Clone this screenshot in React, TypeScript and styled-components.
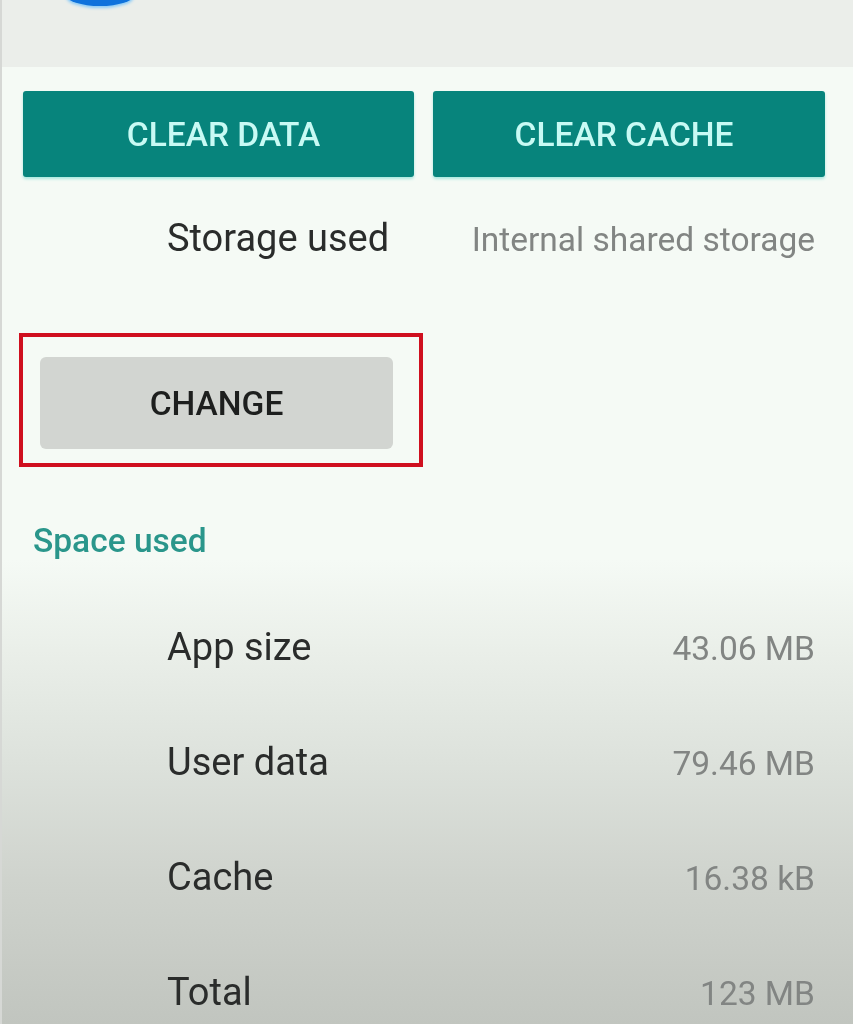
import React from "react";
import styled, { createGlobalStyle } from "styled-components";

const GlobalStyle = createGlobalStyle`
  html, body {
    margin: 0;
    padding: 0;
    background: #f5f9f5;
  }
`;

const Screen = styled.div`
  width: 853px;
  height: 1024px;
  overflow: hidden;
  position: relative;
  font-family: Roboto, "Liberation Sans", sans-serif;
  border-left: 2px solid #d6d8d5;
  box-sizing: border-box;
  background: linear-gradient(
    to bottom,
    #f5faf5 0,
    #f5faf5 560px,
    #eaefe9 650px,
    #dde2dc 760px,
    #cfd3cd 880px,
    #c1c5bf 1024px
  );
`;

const Header = styled.div`
  height: 67px;
  background: #ebeeea;
  position: relative;
`;

const AppIcon = styled.div`
  position: absolute;
  left: 64px;
  top: -16px;
  width: 68px;
  height: 22px;
  border-radius: 50%;
  background: #0f72dc;
  box-shadow: 0 2px 3px #8ccbf7;
`;

const ActionRow = styled.div`
  display: grid;
  grid-template-columns: 391px 392px;
  column-gap: 19px;
  padding: 24px 0 0 21px;
`;

const ActionButton = styled.div<{ $shift: number }>`
  height: 86px;
  display: flex;
  align-items: center;
  justify-content: center;
  padding-left: ${(p) => (p.$shift > 0 ? p.$shift : 0)}px;
  padding-right: ${(p) => (p.$shift < 0 ? -p.$shift : 0)}px;
  background: #07847c;
  border-radius: 3px;
  box-shadow: 0 2px 3px #a9e8df;
  color: #c8faf4;
  font-size: 33.5px;
  font-weight: 500;
`;

const ButtonText = styled.span`
  filter: blur(0.4px);
`;

const Row = styled.div<{ $top: number }>`
  display: flex;
  justify-content: space-between;
  align-items: baseline;
  height: 44px;
  line-height: 44px;
  margin-top: ${(p) => p.$top}px;
  padding: 0 38px 0 165px;
`;

const Label = styled.span`
  font-size: 38px;
  color: #2a2c2b;
  filter: blur(0.4px);
`;

const Value = styled.span`
  font-size: 33.5px;
  color: #828583;
  filter: blur(0.4px);
`;

const Highlight = styled.div`
  width: 404px;
  height: 134px;
  margin: 73px 0 0 17px;
  box-sizing: border-box;
  border: 4px solid #cf0f1e;
  padding: 20px 26px 14px 17px;
`;

const ChangeButton = styled.div`
  height: 92px;
  display: flex;
  align-items: center;
  justify-content: center;
  background: #d2d5d1;
  border-radius: 6px;
  color: #1d1f1e;
  font-size: 33.5px;
  font-weight: 500;
`;

const SectionTitle = styled.div`
  height: 40px;
  line-height: 40px;
  margin: 54px 0 0 31px;
  font-size: 33.5px;
  font-weight: 500;
  color: #2a968b;
  filter: blur(0.4px);
`;

const rows = [
  { label: "App size", value: "43.06 MB", top: 64 },
  { label: "User data", value: "79.46 MB", top: 71 },
  { label: "Cache", value: "16.38 kB", top: 71 },
  { label: "Total", value: "123 MB", top: 71 },
];

const App = () => {
  return (
    <Screen>
      <GlobalStyle />
      <Header>
        <AppIcon />
      </Header>
      <ActionRow>
        <ActionButton $shift={10}>
          <ButtonText>CLEAR DATA</ButtonText>
        </ActionButton>
        <ActionButton $shift={-10}>
          <ButtonText>CLEAR CACHE</ButtonText>
        </ActionButton>
      </ActionRow>
      <Row $top={39}>
        <Label>Storage used</Label>
        <Value>Internal shared storage</Value>
      </Row>
      <Highlight>
        <ChangeButton>
          <ButtonText>CHANGE</ButtonText>
        </ChangeButton>
      </Highlight>
      <SectionTitle>Space used</SectionTitle>
      {rows.map((r) => (
        <Row key={r.label} $top={r.top}>
          <Label>{r.label}</Label>
          <Value>{r.value}</Value>
        </Row>
      ))}
    </Screen>
  );
};

export default App;
